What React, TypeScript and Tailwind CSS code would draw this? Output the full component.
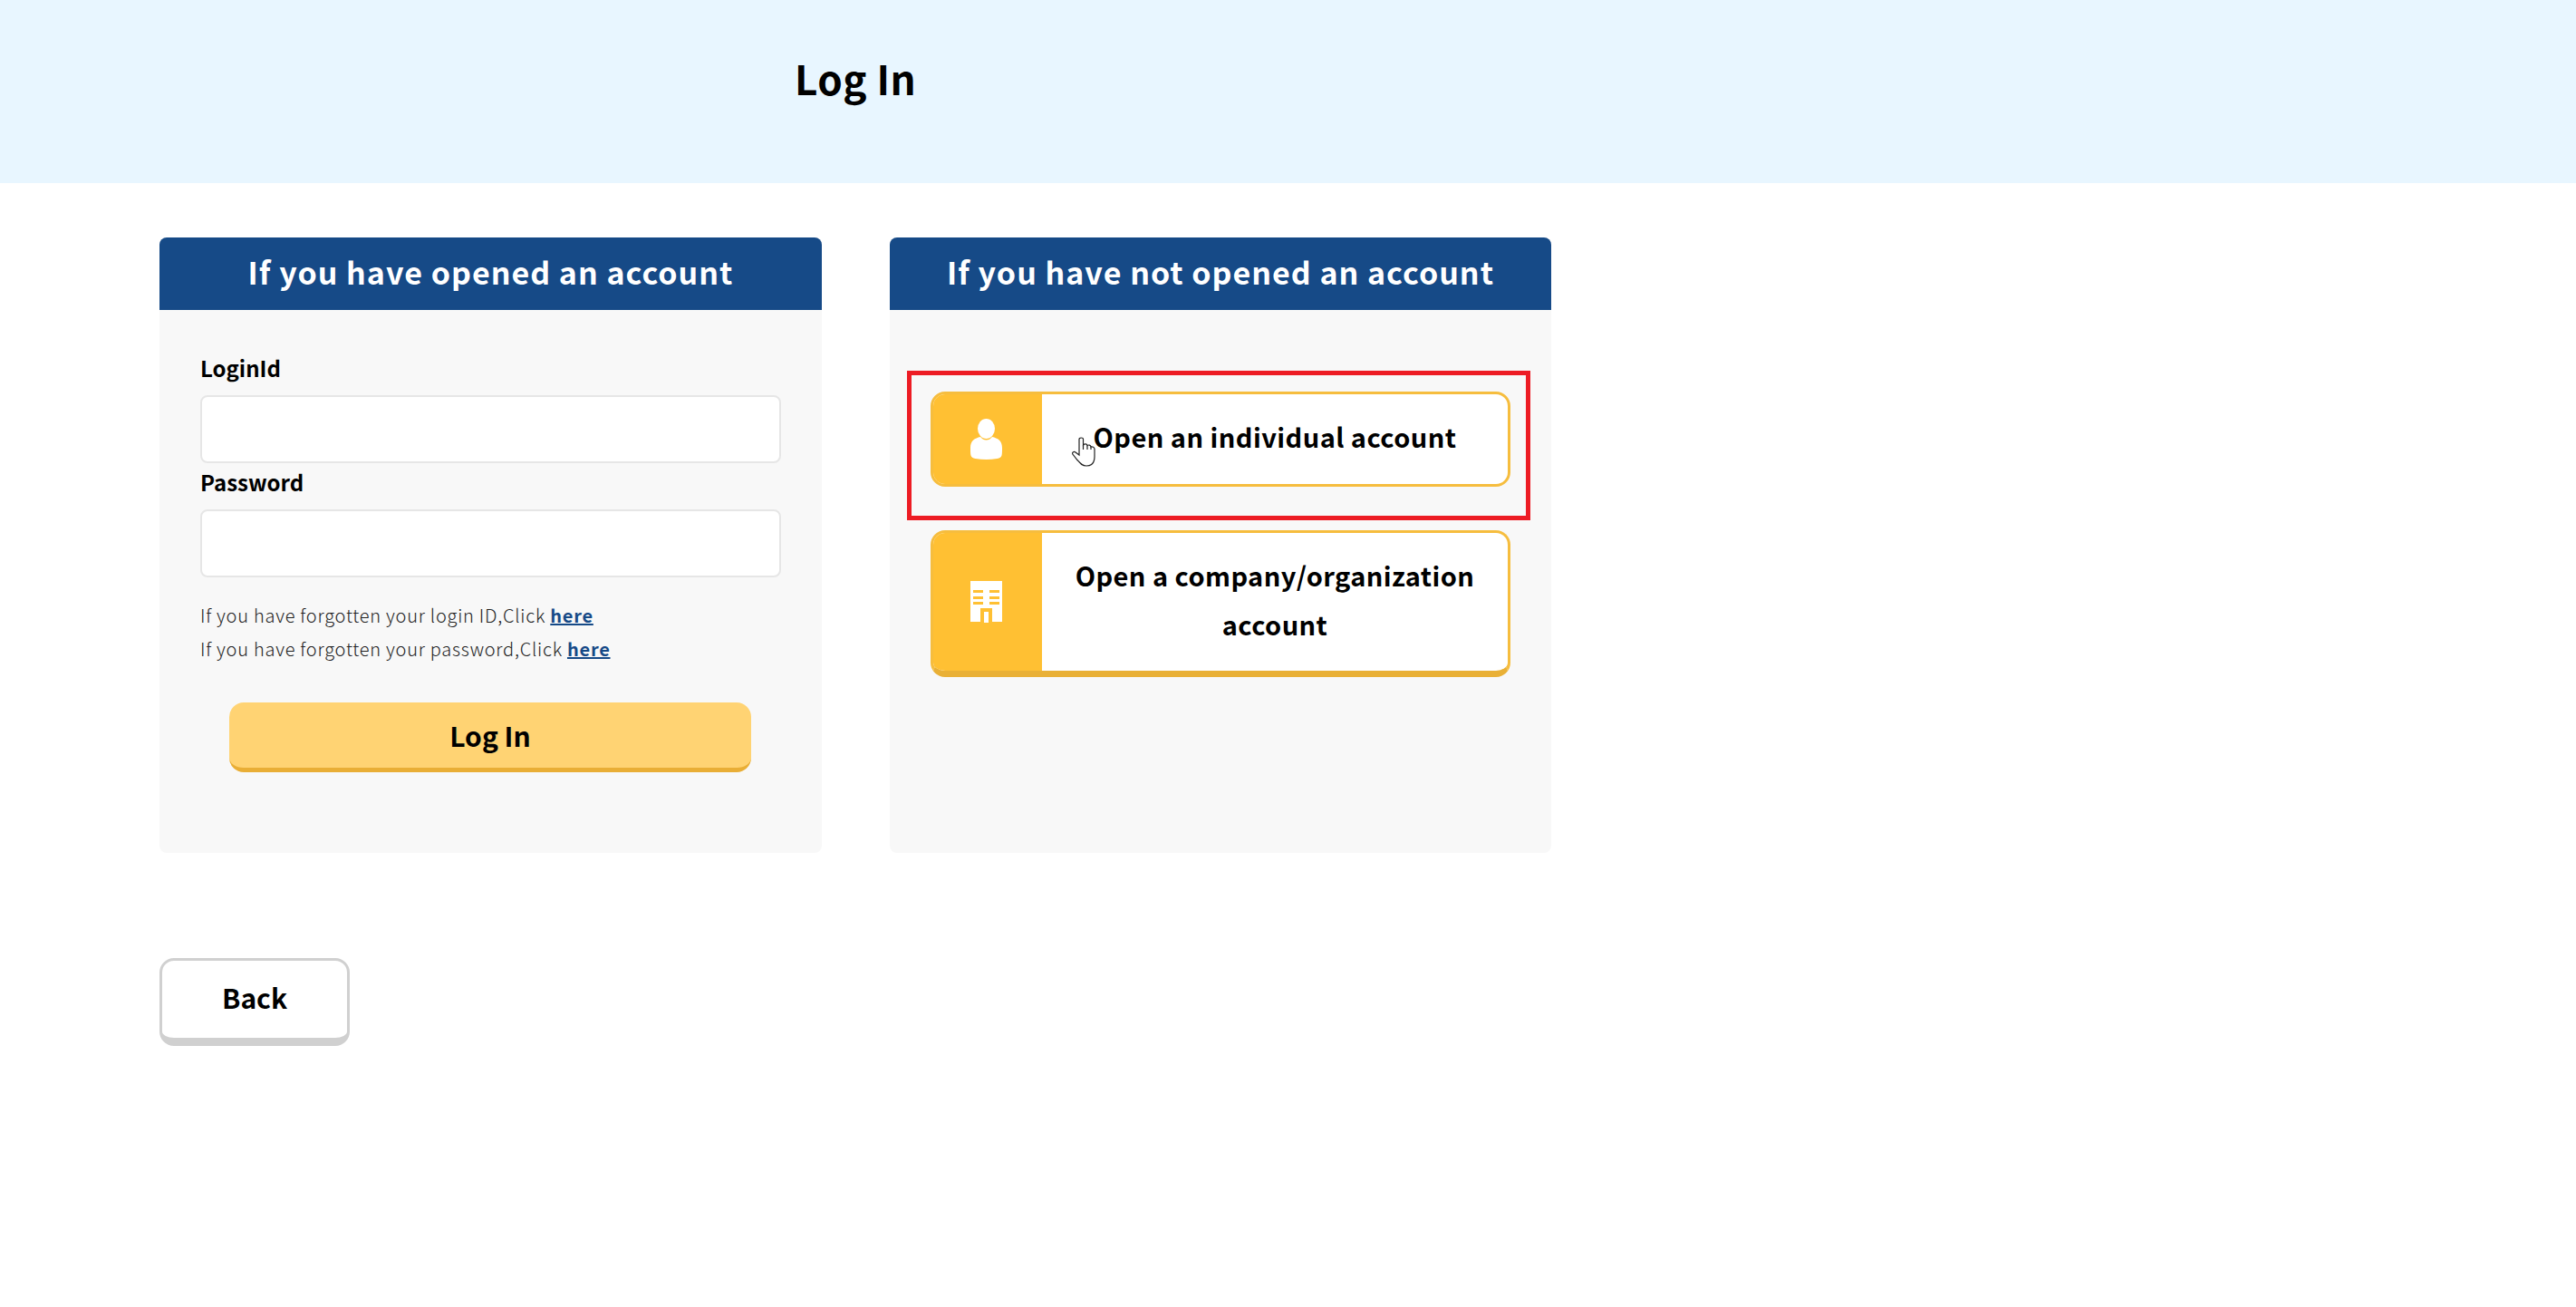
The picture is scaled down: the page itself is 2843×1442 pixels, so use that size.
const PersonIcon = () => (
  <svg width="35" height="45" viewBox="0 0 35 45" fill="#fff">
    <ellipse cx="17.5" cy="11" rx="9.5" ry="11" />
    <path d="M11 20c2 2.500 4 3.500 6.500 3.500s4.500-1 6.500-3.500c6 1.500 11 4 11 12 0 4 0 6.500-.5 8.500-.5 2-2 3-5 3.500-4 .5-8 1-12 1s-8-.5-12-1c-3-.5-4.500-1.500-5-3.500C0 38.500 0 36 0 32c0-8 5-10.500 11-12z" />
  </svg>
);

const BuildingIcon = () => (
  <svg width="35" height="46" viewBox="0 0 35 46">
    <path fill="#fff" d="M0 0h35v45h-11v-15h-13v15H0z" />
    <path fill="#fff" d="M15 34h5v12h-5z" />
    <path
      fill="#ffc033"
      d="M3 10h11v3H3zM21 10h11v3H21zM3 17h11v3H3zM21 17h11v3H21zM3 23h11v3H3zM21 23h11v3H21z"
    />
  </svg>
);

const HandCursor = () => (
  <svg className="absolute left-[201px] top-[220px]" width="26" height="33" viewBox="0 0 26 33" fill="#fff" stroke="#222" strokeWidth="1.2">
    <path d="M8 2.500C8 .5 12.500 .5 12.500 2.500V9C14 7.500 16.500 7.500 17 9.500C18.500 8.500 20.500 9 21 11C22.500 10.500 25 11.500 25 13.500V22C25 28 22 32 16 32C11 32 9 29 6 25.500L.8 19C0 17 2.500 15.500 4 17L8 20Z" />
    <path d="M12.500 9V14M17 9.500V14M21 11V14" fill="none" />
  </svg>
);

const Panel = ({ title, className, children }: { title: string; className: string; children: React.ReactNode }) => (
  <section className={`${className} h-[679px] rounded-lg bg-[#f8f8f8] relative`}>
    <h2 className="h-20 pb-[5px] flex items-center justify-center rounded-t-lg bg-[#164a87] text-white text-[34px] font-bold tracking-[1px]">
      {title}
    </h2>
    {children}
  </section>
);

const Field = ({ label }: { label: string }) => (
  <div>
    <label className="block h-[50px] text-[24px] font-bold leading-[40px] text-black">{label}</label>
    <input className="block w-full h-[75px] mb-px rounded-lg border-2 border-[#e6e6e6] bg-white" />
  </div>
);

export default function App() {
  return (
    <div className="min-h-[1442px] bg-white font-['Noto_Sans_CJK_JP','Noto_Sans',sans-serif] text-black">
      <header className="h-[202px] bg-[#e8f6ff] pl-[877px] pt-[52px]">
        <h1 className="text-[44px] leading-[68px] font-bold tracking-[0.5px]">Log In</h1>
      </header>

      <main className="pl-[176px] pt-[60px]">
        <div className="flex gap-[75px]">
          <Panel title="If you have opened an account" className="w-[731px]">
            <div className="px-[45px] pt-[44px]">
              <Field label="LoginId" />
              <Field label="Password" />
              <div className="mt-[23px] text-[20px] font-light leading-[37px] text-[#222] tracking-[0.75px]">
                <p>
                  If you have forgotten your login ID,Click{" "}
                  <a className="font-bold text-[#164a87] underline" href="#">here</a>
                </p>
                <p>
                  If you have forgotten your password,Click{" "}
                  <a className="font-bold text-[#164a87] underline" href="#">here</a>
                </p>
              </div>
              <button className="block ml-[32px] mt-[41px] w-[576px] h-[77px] rounded-2xl border-b-[5px] border-[#e9ae36] bg-[#ffd373] text-[30px] font-bold">
                Log In
              </button>
            </div>
          </Panel>

          <Panel title="If you have not opened an account" className="w-[730px]">
            <div className="px-[45px] pt-[90px] flex flex-col gap-[48px]">
              <a className="flex h-[105px] rounded-2xl border-[3px] border-[#f6bd3e] bg-white overflow-hidden" href="#">
                <span className="w-[120px] pr-[3px] bg-[#ffc033] flex items-center justify-center">
                  <PersonIcon />
                </span>
                <span className="flex-1 pb-[7px] flex items-center justify-center text-center text-[29px] tracking-[0.45px] font-bold leading-[54px]">
                  Open an individual account
                </span>
              </a>
              <a className="flex h-[162px] rounded-2xl border-[3px] border-b-[7px] border-[#f6bd3e] border-b-[#e9b036] bg-white overflow-hidden" href="#">
                <span className="w-[120px] pr-[3px] bg-[#ffc033] flex items-center justify-center">
                  <BuildingIcon />
                </span>
                <span className="flex-1 pb-[7px] flex items-center justify-center text-center text-[29px] tracking-[0.45px] font-bold leading-[54px] px-2">
                  Open a company/organization account
                </span>
              </a>
            </div>
            <div className="absolute left-[19px] top-[147px] w-[688px] h-[165px] border-[5px] border-[#ed1c24]" />
            <HandCursor />
          </Panel>
        </div>

        <button className="mt-[116px] block w-[210px] h-[97px] rounded-2xl border-[3px] border-b-[9px] border-[#d0d0d0] bg-white text-[30px] font-bold pb-[5px]">
          Back
        </button>
      </main>
    </div>
  );
}
